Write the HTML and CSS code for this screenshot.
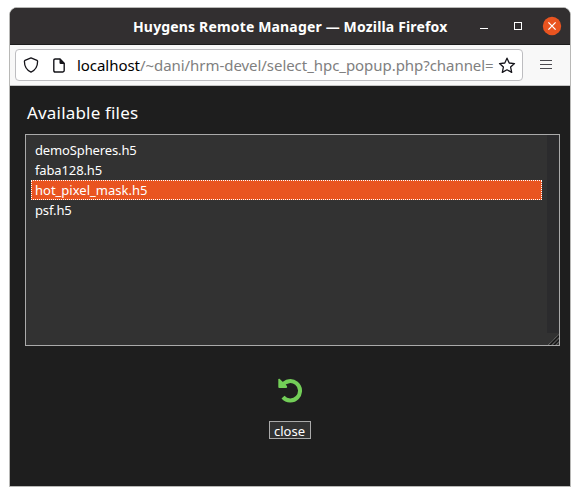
FILE: index.html
```html
<!DOCTYPE html>
<html lang="en">
<head>
<meta charset="utf-8">
<title>Huygens Remote Manager</title>
<link rel="stylesheet" href="styles.css">
</head>
<body>
<div class="window">
  <header class="titlebar">
    <div class="title">Huygens Remote Manager — Mozilla Firefox</div>
    <svg class="controls" width="90" height="36" viewBox="0 0 90 36">
      <path d="M0 20.5h8" stroke="#fff"/>
      <rect x="34.5" y="14.5" width="7" height="7" fill="none" stroke="#fff"/>
      <circle cx="72" cy="18" r="9.2" fill="#e95420"/>
      <path d="M68.4 14.4l7.2 7.2M75.6 14.4l-7.2 7.2" stroke="#fff" stroke-width="1.3"/>
    </svg>
  </header>
  <div class="toolbar">
    <div class="urlbar">
      <svg class="shield" width="16" height="18" viewBox="0 0 16 18" fill="none" stroke="#15141a" stroke-width="1.3" stroke-linejoin="round"><path d="M8 1.9L14 4.3Q14.6 4.6 14.6 5.3C14.6 10 12.3 14.2 8 16.2C3.7 14.2 1.4 10 1.4 5.3Q1.4 4.6 2 4.3Z"/></svg>
      <svg class="page" width="12" height="15" viewBox="0 0 12 15"><path d="M2.2 1H7L11.2 5.2V12.6Q11.2 14 9.8 14H2.2Q.8 14 .8 12.6V2.4Q.8 1 2.2 1Z" fill="none" stroke="#15141a" stroke-width="1.4"/><path d="M6.5 .7L11.8 6H7.7Q6.5 6 6.5 4.8Z" fill="#15141a"/></svg>
      <span class="url"><b>localhost</b>/~dani/hrm-devel/select_hpc_popup.php?channel=</span>
      <svg class="star" width="18" height="17" viewBox="0 0 18 17" fill="none" stroke="#15141a" stroke-width="1.3" stroke-linejoin="round"><path d="M9 1.2L11.2 6L16.5 6.6L12.6 10.1L13.7 15.4L9 12.8L4.3 15.4L5.4 10.1L1.5 6.6L6.8 6Z"/></svg>
    </div>
    <svg width="12" height="12" viewBox="0 0 12 12" stroke="#4b4a50" stroke-width="1.1"><path d="M0 1.5h12M0 5.5h12M0 9.5h12"/></svg>
  </div>
  <main class="content">
    <h1>Available files</h1>
    <div class="listbox">
      <ul>
        <li class="tight">demoSpheres.h5</li>
        <li class="tight">faba128.h5</li>
        <li class="selected">hot_pixel_mask.h5</li>
        <li class="tight">psf.h5</li>
      </ul>
      <div class="rail">
        <div class="track"></div>
        <svg width="12" height="12" viewBox="0 0 12 12" stroke-width="1"><path d="M1 12L12 1M5 12L12 5M9 12L12 9" stroke="#707070" stroke-dasharray="1 .7"/><path d="M3 12L12 3M7 12L12 7" stroke="#111"/></svg>
      </div>
    </div>
    <svg class="reload" width="24" height="25" viewBox="0 0 24 25"><path d="M4.3 7.3A9.7 9.7 0 1 1 5 19.1" fill="none" stroke="#73ce58" stroke-width="4"/><path d="M.3 1.6Q.3 .4 1.5 .7L9 8Q9.7 9.9 8.2 10.1H1.3Q.3 10 .3 9Z" fill="#73ce58"/></svg>
    <button>close</button>
  </main>
</div>
</body>
</html>
```

FILE: styles.css
```css
* { box-sizing: border-box; }
body {
  margin: 0;
  padding: 7px 9px 9px;
  background: #fff;
  font-family: "Noto Sans", "Open Sans", sans-serif;
}
svg { display: block; flex: none; }
.window {
  width: 562px;
  height: 480px;
  border: 1px solid #b8b8b6;
  border-radius: 8px 8px 0 0;
  overflow: hidden;
  background: #1e1e1e;
}
.titlebar {
  height: 37px;
  display: flex;
  background: #322f30;
  border-bottom: 1px solid #1c1c1c;
}
.title {
  width: 470px;
  padding-left: 123px;
  font-size: 14px;
  line-height: 37px;
  font-weight: 700;
  letter-spacing: .16px;
  color: #fff;
  white-space: nowrap;
}
.toolbar {
  height: 41px;
  display: flex;
  align-items: center;
  gap: 17px;
  padding-left: 5px;
  background: #f8f8f8;
  border-bottom: 1px solid #c4c4c4;
}
.urlbar {
  width: 508px;
  height: 32px;
  display: flex;
  align-items: center;
  padding-left: 7px;
  background: #fff;
  border: 1px solid #bdbdc0;
  border-radius: 4px;
}
.page { margin-left: 14px; }
.url {
  width: 421px;
  margin-left: 12px;
  font-size: 15px;
  letter-spacing: -.05px;
  white-space: nowrap;
  color: #808080;
}
.url b { font-weight: 400; color: #000; }
.content {
  height: 400px;
  display: flex;
  flex-direction: column;
  align-items: center;
  padding: 15px 10px 0 15px;
  color: #fff;
}
h1 {
  width: 100%;
  height: 24px;
  margin: 0 0 9px;
  padding-left: 2px;
  font-size: 17px;
  line-height: 24px;
  font-weight: 400;
  letter-spacing: .18px;
}
.listbox {
  width: 535px;
  height: 212px;
  display: flex;
  border: 1px solid #aaa;
  background: #323232;
}
ul {
  flex: 1;
  margin: 0;
  padding: 5px;
  list-style: none;
  font-size: 13px;
}
li {
  height: 20px;
  padding-left: 3px;
  border: 1px solid transparent;
  line-height: 19px;
}
.tight { letter-spacing: -.13px; }
.selected { background: #e95420; border: 1px dotted #fff; }
.rail { width: 12px; }
.track { height: 198px; background: #2b2b2d; }
.reload { margin: 32px 6px 18px 0; }
button {
  width: 42px;
  height: 18px;
  margin-right: 6px;
  padding: 1px 0 0;
  border: 1px solid #aaa;
  background: #323232;
  color: #fff;
  font: 13px/17px "Noto Sans", sans-serif;
}
```
